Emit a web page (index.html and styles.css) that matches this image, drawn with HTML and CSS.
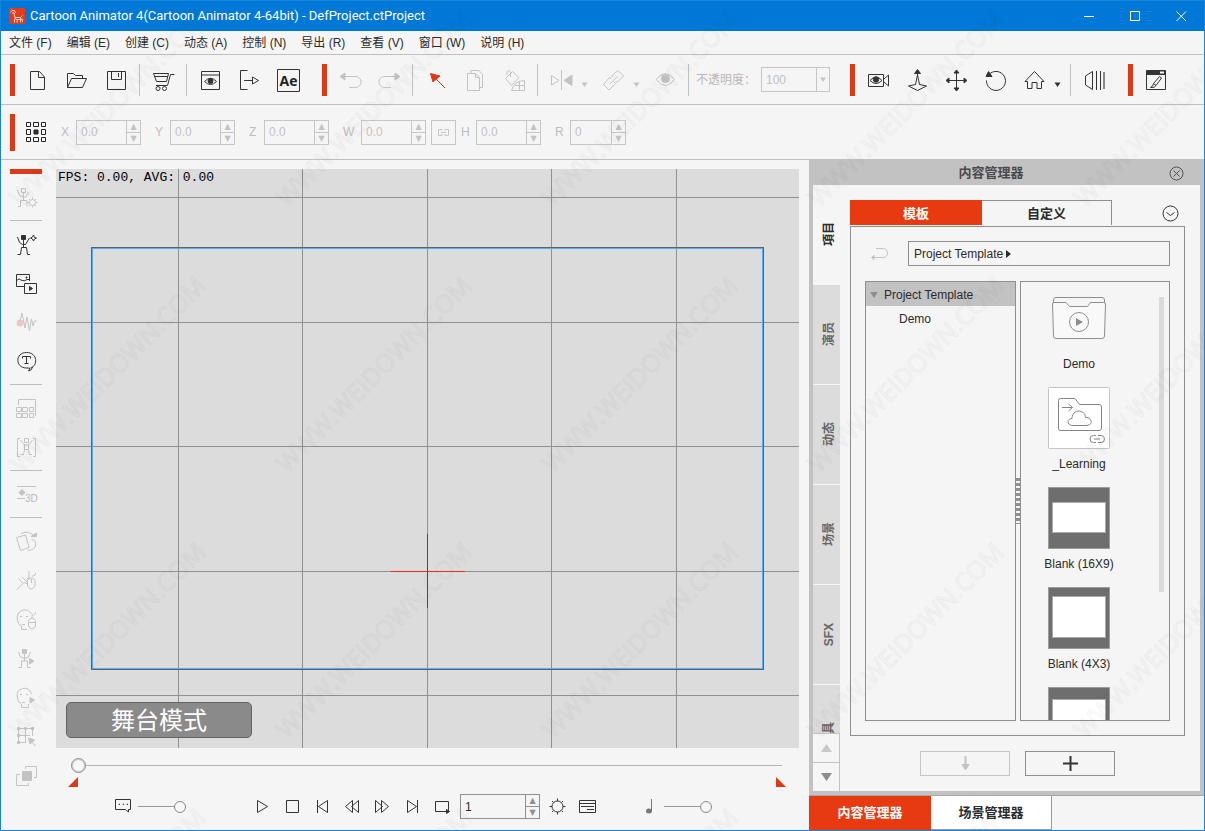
FILE: index.html
```html
<!DOCTYPE html>
<html lang="zh-CN">
<head>
<meta charset="utf-8">
<title>Cartoon Animator 4</title>
<link rel="stylesheet" href="styles.css">
</head>
<body>
<div class="app">
  <header class="titlebar">
    <svg class="logo" viewBox="0 0 16 16"><rect width="16" height="16" fill="#e8391a"/><path d="M1.500 4.500L3 2.500H5.500L6.500 4.500L5 6L6 9.500H11.500L13.500 7.500M2.500 1.500L3.500 2.500M6.500 9.500L5.500 12V14.500M8.500 11L8 14.500M11.500 10V14.500M13 10.500L13.500 14M3 5H5M6.500 11.500H12.500" stroke="#ffd9cf" fill="none"/></svg>
    <h1 class="title">Cartoon Animator 4(Cartoon Animator 4-64bit) - DefProject.ctProject</h1>
    <div class="win-buttons">
      <button class="win" aria-label="最小化"><svg viewBox="0 0 11 11"><path d="M0 5.500H10"/></svg></button>
      <button class="win" aria-label="最大化"><svg viewBox="0 0 11 11"><path d="M.5.5H9.500V9.500H.5Z"/></svg></button>
      <button class="win" aria-label="关闭"><svg viewBox="0 0 11 11"><path d="M.5.5L10 10M10 .5L.5 10"/></svg></button>
    </div>
  </header>

  <nav class="menubar">
    <button>文件 (F)</button><button>编辑 (E)</button><button>创建 (C)</button><button>动态 (A)</button><button>控制 (N)</button><button>导出 (R)</button><button>查看 (V)</button><button>窗口 (W)</button><button>说明 (H)</button>
  </nav>

  <div class="toolbar">
    <span class="grip"></span>
    <button class="tool" aria-label="新建"><svg viewBox="0 0 25 25"><path d="M4.500 4.500H13.500L18.500 10V22.500H4.500Z"/><path d="M12.500 4.500V10.500H18.500"/></svg></button>
    <button class="tool" aria-label="打开"><svg viewBox="0 0 25 25"><path d="M2.500 20.500V6.500H8.500L10.500 8.500H17.500V11.500M2.500 20.500L6.500 11.500H21.500L17.500 20.500Z"/></svg></button>
    <button class="tool" aria-label="保存"><svg viewBox="0 0 25 25"><path d="M3.500 4.500H21.500V22.500H3.500Z"/><path d="M7.500 4.500V12.500H17.500V4.500M14.500 6V10"/></svg></button>
    <span class="sep"></span>
    <button class="tool" aria-label="商店"><svg viewBox="0 0 25 25"><path d="M23.500 7.500H19.500L16.500 18.500H5M2.500 6.500H17.500L15.500 14.500H5.500ZM3.500 9.500H16.500"/><circle cx="7" cy="21.500" r="2"/><circle cx="13.500" cy="21.500" r="2"/></svg></button>
    <span class="sep"></span>
    <button class="tool" aria-label="预览"><svg viewBox="0 0 25 25"><path d="M3.500 4.500H21.500V22.500H3.500ZM3.500 8H21.500"/><path d="M6.500 14.500Q12.500 8 18.500 14.500Q12.500 20.500 6.500 14.500Z"/><circle cx="12.500" cy="14" r="2.500" class="solid"/></svg></button>
    <button class="tool" aria-label="导出"><svg viewBox="0 0 25 25"><path d="M10.500 3.500H3.500V22.500H10.500M7 13.500H15.500M15.500 10V17L21.500 13.500Z"/></svg></button>
    <button class="tool" aria-label="After Effects"><svg viewBox="0 0 25 25"><path d="M1.500 2.500H23.500V24.500H1.500Z"/><text class="ae" x="12.500" y="19" text-anchor="middle">Ae</text></svg></button>
    <span class="grip grip-next"></span>
    <button class="tool off" aria-label="撤销" disabled><svg viewBox="0 0 25 25"><path d="M5 9.500H17C25 9.500 25 20.500 17 20.500H11"/><path class="solid" d="M2 9.500L7 6V13Z"/></svg></button>
    <button class="tool off" aria-label="重做" disabled><svg viewBox="0 0 25 25"><path d="M20 9.500H8C0 9.500 0 20.500 8 20.500H14"/><path class="solid" d="M23 9.500L18 6V13Z"/></svg></button>
    <span class="sep"></span>
    <button class="tool pick" aria-label="选择"><svg viewBox="0 0 25 25"><path d="M10 10L21 21"/><path class="solid" d="M6.500 6.500L16 9L9 15Z"/></svg></button>
    <button class="tool off" aria-label="复制" disabled><svg viewBox="0 0 25 25"><path d="M4.500 6.500H12.500L16.500 10.500V23.500H4.500ZM8 6.500V3.500H16L19.500 7.500V20.500H17M12.500 7V10.500H16"/></svg></button>
    <button class="tool off" aria-label="填充" disabled><svg viewBox="0 0 25 25"><path d="M5 8V4.500Q7 2 8.500 5V10M3.500 11.500L10.500 4.500L17 10.500L9.500 18.500Z"/><path d="M22.500 13.500V23.500H9.500Q12 14 22.500 13.500ZM17.500 14.500V23M13 18.500H22"/></svg></button>
    <span class="sep"></span>
    <button class="tool off" aria-label="翻转" disabled><svg viewBox="0 0 25 25"><path d="M2.500 8.500V18L10 13.500ZM12.500 3V23"/><path class="solid" d="M23 8V18.500L15 13.500Z"/></svg></button>
    <button class="more off" aria-label="翻转选项" disabled><svg viewBox="0 0 7 25"><path class="solid" d="M.5 15.500H6.500L3.500 20Z"/></svg></button>
    <button class="tool off" aria-label="链接" disabled><svg viewBox="0 0 25 25"><path d="M10.500 12L8.500 10.500L2.500 17.500L8 23L14.500 16.500L12.500 14.500M12 10.500L10.500 9L17 3.500L22.500 9L16 15.500L14.500 14M8.500 17L16.500 9.500"/></svg></button>
    <button class="more off" aria-label="链接选项" disabled><svg viewBox="0 0 7 25"><path class="solid" d="M.5 15.500H6.500L3.500 20Z"/></svg></button>
    <button class="tool off" aria-label="可见" disabled><svg viewBox="0 0 25 25"><path d="M3 12.500Q12.500 .5 21.500 12.500Q12.500 24.500 3 12.500Z"/><circle class="solid" cx="12.500" cy="11.500" r="4"/></svg></button>
    <span class="sep"></span>
    <label class="opacity-label" for="opacity">不透明度：</label>
    <span class="combo"><select id="opacity" disabled><option>100</option></select><svg viewBox="0 0 13 23"><path d="M.5 0V23"/><path class="solid" d="M4 9.500H10L7 14Z"/></svg></span>
    <span class="grip grip-far"></span>
    <button class="tool" aria-label="摄像机"><svg viewBox="0 0 25 25"><path d="M2.500 7.500H17.500V19.500H2.500ZM18 12L22.500 8V19L18 15"/><path d="M4 13.500Q10 6.500 16 13.500Q10 19.500 4 13.500Z"/><circle class="solid" cx="10" cy="12.500" r="2.700"/></svg></button>
    <button class="tool" aria-label="升降"><svg viewBox="0 0 25 25"><path d="M12.500 3V8L14.500 17.500L21.500 19L12.500 23.500L3.500 19L10.500 17.500L12.500 8"/><path class="solid" d="M12.500 2.500L15.500 6.500H9.500Z"/></svg></button>
    <button class="tool" aria-label="移动"><svg viewBox="0 0 25 25"><path d="M12.500 4V23M3 13.500H22"/><path class="solid" d="M12.500 3L15 6H10ZM12.500 24L15 21H10ZM2 13.500L5 11V16ZM23 13.500L20 11V16Z"/></svg></button>
    <button class="tool" aria-label="旋转"><svg viewBox="0 0 25 25"><path d="M6 7.500A9.500 9.500 0 1 1 3.500 13.500"/><path class="solid" d="M5.500 4.500L9 9.500H3Z"/></svg></button>
    <button class="tool" aria-label="主页"><svg viewBox="0 0 25 25"><path d="M12.500 4.500L22 14.500H19.500V21.500H15V15.500H10V21.500H5.500V14.500H3Z"/></svg></button>
    <button class="more" aria-label="主页选项"><svg viewBox="0 0 7 25"><path class="solid" d="M.5 15.500H6.500L3.500 20Z"/></svg></button>
    <span class="sep"></span>
    <button class="tool" aria-label="景深"><svg viewBox="0 0 25 25"><path d="M10.500 4.500L3.500 9V18L10.500 22.500ZM14.500 4V23M18.500 4V23"/><path d="M22 5V22" stroke="#888" stroke-width="2"/></svg></button>
    <span class="grip grip-next"></span>
    <button class="tool" aria-label="合成器"><svg viewBox="0 0 25 25"><path d="M2.500 4.500H21.500V22.500H2.500Z"/><path class="solid" d="M2.500 3.500H21.500V7.500H2.500Z"/><path d="M16 4.500H20V6.500H16Z" fill="#fff" stroke="none"/><path d="M15.500 9.500L17.500 11L12 18.500L9.500 16.500ZM9.500 16.500Q9.500 19 6.500 20.500Q11 21 12 18.500"/></svg></button>
  </div>

  <div class="toolbar transform">
    <span class="grip"></span>
    <button class="anchor" aria-label="锚点"><svg viewBox="0 0 25 25"><path d="M2.500 2.500H6.500V6.500H2.500ZM9.500 2.500H14.500V6.500H9.500ZM17.500 2.500H21.500V6.500H17.500ZM2.500 9.500H6.500V14.500H2.500ZM17.500 9.500H21.500V14.500H17.500ZM2.500 17.500H6.500V21.500H2.500ZM9.500 17.500H14.500V21.500H9.500ZM17.500 17.500H21.500V21.500H17.500Z"/><path class="solid" d="M10 10H14V14H10Z"/></svg></button>
    <div class="field first"><label for="fx">X</label><span class="spin"><input id="fx" value="0.0" disabled><span class="steps"><button disabled aria-label="增加">▲</button><button disabled aria-label="减少">▼</button></span></span></div>
    <div class="field"><label for="fy">Y</label><span class="spin"><input id="fy" value="0.0" disabled><span class="steps"><button disabled aria-label="增加">▲</button><button disabled aria-label="减少">▼</button></span></span></div>
    <div class="field"><label for="fz">Z</label><span class="spin"><input id="fz" value="0.0" disabled><span class="steps"><button disabled aria-label="增加">▲</button><button disabled aria-label="减少">▼</button></span></span></div>
    <div class="field wide"><label for="fw">W</label><span class="spin"><input id="fw" value="0.0" disabled><span class="steps"><button disabled aria-label="增加">▲</button><button disabled aria-label="减少">▼</button></span></span></div>
    <button class="lock" aria-label="锁定比例" disabled><svg viewBox="0 0 13 9"><path d="M5 2.500V1.500H1.500V7.500H5V6M8 2.500V1.500H11.500V7.500H8V6M4 4.500H9"/></svg></button>
    <div class="field near"><label for="fh">H</label><span class="spin"><input id="fh" value="0.0" disabled><span class="steps"><button disabled aria-label="增加">▲</button><button disabled aria-label="减少">▼</button></span></span></div>
    <div class="field"><label for="fr">R</label><span class="spin short"><input id="fr" value="0" disabled><span class="steps"><button disabled aria-label="增加">▲</button><button disabled aria-label="减少">▼</button></span></span></div>
  </div>

  <main class="work">
    <aside class="side">
      <span class="side-grip"></span>
      <button class="off" disabled aria-label="角色设定"><svg viewBox="0 0 25 25"><path d="M7.500 3.500H11.500V7.500H7.500ZM3.500 5L5.500 10.500L9.500 12H12L14.500 7M9.500 8V15M4 21.500H6.500V15.500H13V21.500"/><circle cx="18.500" cy="17.500" r="3"/><path d="M18.500 12.500V14M18.500 21V22.500M13.500 17.500H15M22 17.500H23.500M15 14L16 15M21 20L22 21M22 14L21 15M15 21L16 20"/></svg></button>
      <hr>
      <button aria-label="新建角色"><svg viewBox="0 0 25 25"><path class="solid" d="M7.500 3.500H11.500V7.500H7.500Z"/><path d="M3.500 5L5.500 10.500L8.500 12.500H11.500L15.500 6M9.500 8V15M3.500 22.500H6.500L7.500 15.500H12.500L13.500 22.500H16M19.500 3L20.500 5.500L22.500 6L20.500 7L19.500 9L18.500 7L16.500 6L18.500 5Z"/></svg></button>
      <button aria-label="新建场景"><svg viewBox="0 0 25 25"><path d="M10 15.500H2.500V3.500H15.500V10M2.500 9.500Q5 6.500 8 9.500Q11 10.500 13 8.500H15.500M10.500 12.500H22.500V22.500H10.500Z"/><path class="solid" d="M15.500 15.500V19.500L18.500 17.500ZM12 6H13V7H12Z"/></svg></button>
      <button class="off" disabled aria-label="录音"><svg viewBox="0 0 25 25"><circle cx="6" cy="13" r="3.500" fill="#ecc8c8" stroke="none"/><path d="M6 11L8 3L11 18L13 7L15.500 21L17.500 9L19 16L20.500 11H22.500"/></svg></button>
      <button aria-label="文字"><svg viewBox="0 0 25 25"><path d="M16.500 19C24 17 24 3.500 12.500 3.500C1 3.500 1 19 12.500 19L15.500 19Q16 20 14.500 22Q18 21.500 18.500 18"/><path d="M8.500 9.500V7.500H16.500V9.500M12.500 7.500V14.500M10.500 14.500H14.500"/></svg></button>
      <hr>
      <button class="off" disabled aria-label="精灵编辑"><svg viewBox="0 0 25 25"><path d="M4.500 9V3.500H21.500V20M2.500 11.500H7.500V15.500H2.500ZM8.500 11.500H13.500V15.500H8.500ZM15.500 11.500H19.500V15.500H15.500ZM2.500 17.500H7.500V21.500H2.500ZM8.500 17.500H13.500V21.500H8.500ZM15.500 17.500H19.500V21.500H15.500Z"/></svg></button>
      <button class="off" disabled aria-label="骨骼编辑"><svg viewBox="0 0 25 25"><path d="M6 3.500H3.500V21.500H6M19 3.500H21.500V21.500H19M10.500 3.500H14.500V7.500H10.500ZM6.500 5L10.500 10H14.500L18.500 5M10.500 10V14.500L9.500 19.500H7M14.500 10V14.500L15.500 19.500H18M10.500 14.500H14.500"/></svg></button>
      <hr>
      <button class="off" disabled aria-label="3D"><svg viewBox="0 0 25 25"><path d="M3 4.500H22M3 16.500H11"/><path class="solid" d="M8 7.500L11 10.500L8 13.500L5 10.500Z"/><text class="three" x="11" y="20">3D</text></svg></button>
      <hr>
      <button class="off" disabled aria-label="旋转角色"><svg viewBox="0 0 25 25"><path d="M2.500 8.500L11.500 6L15 18.500L6.500 21.500ZM7 4.500Q15 1 20 7M17.500 10.500Q23 11.500 21.500 17Q18.500 22.500 13.500 21"/><path class="solid" d="M17 7.500H22.500V4Z"/></svg></button>
      <button class="off" disabled aria-label="动作控制"><svg viewBox="0 0 25 25"><path d="M2.500 22L10 14.500L14 16M5 11L8.500 15M8 9L13 14"/><path d="M12.500 11L15 10M13.500 12V18Q17 24 21 18V12Q17 8 13.500 12ZM17.500 11V15M18 8Q22 8 21.500 5M15 3V12"/></svg></button>
      <button class="off" disabled aria-label="面部控制"><svg viewBox="0 0 25 25"><path d="M17.500 7Q14 1 8 3.500Q2 6 3.500 13Q4 18 7.500 19V22.500H13M6 9.500H8M12 9.500H14M8 17.500H11"/><path d="M14.500 13.500Q18 9 21.500 13.500V19Q18 25 14.500 19ZM14.500 15.500H21.500M18 11V8Q22 8 21.500 5"/></svg></button>
      <button class="off" disabled aria-label="动作剪辑"><svg viewBox="0 0 25 25"><path class="solid" d="M8.500 3.500H12.500V7.500H8.500Z"/><path d="M4.500 6L6.500 11L10.500 12.500L14.500 11L16.500 6M10.500 8V15M4.500 21.500H7.500V15H13.500V21.500H17"/><path class="solid" d="M15.500 12.500V18L20 15Z"/></svg></button>
      <button class="off" disabled aria-label="面部剪辑"><svg viewBox="0 0 25 25"><path d="M17.500 9Q15 2 8.500 3.500Q1.500 6 3.500 13Q4 18 7.500 19V22.500H14.500V19M6 9.500H8M12 9.500H14M8 17.500H11"/><path class="solid" d="M16 12.500V18L20.500 15Z"/></svg></button>
      <button class="off" disabled aria-label="网格变形"><svg viewBox="0 0 25 25"><path d="M4.500 4.500H18.500V12M4.500 4.500V18.500H12M11.500 4.500V18.500M4.500 11.500H16M16 16L21.500 22"/><path class="solid" d="M3.500 3.500H5.500V5.500H3.500ZM10.500 3.500H12.500V5.500H10.500ZM17.500 3.500H19.500V5.500H17.500ZM3.500 10.500H5.500V12.500H3.500ZM3.500 17.500H5.500V19.500H3.500ZM14.500 14L20.500 16L16 20Z"/></svg></button>
      <button class="off" disabled aria-label="图层顺序"><svg viewBox="0 0 25 25"><path class="solid" d="M8.500 8.500H17.500V17.500H8.500Z"/><path d="M11.500 6V3.500H22.500V14.500H20M6 11.500H2.500V22.500H14.500V20"/></svg></button>
    </aside>

    <section class="center">
      <div class="stage">
        <svg class="grid" viewBox="0 0 743 579" preserveAspectRatio="xMidYMid slice">
          <path class="rule" d="M0 28.500H743M0 153.500H743M0 277.500H743M0 402.500H743M0 526.500H743M122.500 0V579M246.500 0V579M371.500 0V579M495.500 0V579M620.500 0V579"/>
          <rect class="edge" x="35.500" y="78.500" width="672" height="422"/>
          <rect class="edge-in" x="36.500" y="79.500" width="670" height="420"/>
          <path class="axis-x" d="M334 402.500H409"/>
          <path class="axis-y" d="M371.500 365V439"/>
        </svg>
        <p class="fps">FPS: 0.00, AVG: 0.00</p>
        <p class="mode">舞台模式</p>
      </div>
      <div class="timeline">
        <input class="scrub" type="range" min="1" max="900" value="1" aria-label="时间轴">
        <div class="marks"><svg viewBox="0 0 10 10"><path d="M10 0V10H0Z"/></svg><svg viewBox="0 0 10 10"><path d="M0 0V10H10Z"/></svg></div>
      </div>
      <div class="player">
        <div class="group left">
          <button aria-label="注释"><svg viewBox="0 0 25 25"><path d="M4.500 5.500H19.500V15.500H17.500V18L14.500 15.500H4.500Z"/><path class="solid" d="M8 10H8.500V10.500H8ZM12 10H12.500V10.500H12ZM16 10H16.500V10.500H16Z"/></svg></button>
          <input class="mini" type="range" value="100" aria-label="缩放">
        </div>
        <div class="group">
          <button aria-label="播放"><svg viewBox="0 0 25 25"><path d="M7.500 6.500L17.500 12.500L7.500 18.500Z"/></svg></button>
          <button aria-label="停止"><svg viewBox="0 0 25 25"><path d="M6.500 6.500H18.500V18.500H6.500Z"/></svg></button>
          <button aria-label="起始"><svg viewBox="0 0 25 25"><path d="M7.500 6V19M17.500 6.500V18.500L8.500 12.500Z"/></svg></button>
          <button aria-label="后退"><svg viewBox="0 0 25 25"><path d="M12.500 6.500V18.500L5.500 12.500ZM18.500 6.500V18.500L11.500 12.500Z"/></svg></button>
          <button aria-label="前进"><svg viewBox="0 0 25 25"><path d="M11.500 6.500V18.500L18.500 12.500ZM5.500 6.500V18.500L12.500 12.500Z"/></svg></button>
          <button aria-label="末尾"><svg viewBox="0 0 25 25"><path d="M17.500 6V19M7.500 6.500V18.500L16.500 12.500Z"/></svg></button>
          <button aria-label="循环"><svg viewBox="0 0 25 25"><path d="M16 17.500H5.500V7.500H18.500V17.500H16"/><path class="solid" d="M16.500 15.500V19.500L19.500 17.500Z"/></svg></button>
          <span class="spin frame"><input value="1" aria-label="当前帧"><span class="steps"><button aria-label="增加">▲</button><button aria-label="减少">▼</button></span></span>
          <button aria-label="设置"><svg viewBox="0 0 25 25"><circle cx="11.500" cy="12.500" r="5.500"/><path d="M11.500 4.500V7M11.500 18V20.500M3.500 12.500H6M17 12.500H19.500M6 7L7.500 8.500M15.500 16.500L17 18M17 7L15.500 8.500M6 18L7.500 16.500"/></svg></button>
          <button aria-label="时间轴面板"><svg viewBox="0 0 25 25"><path d="M3.500 6.500H19.500V18.500H3.500ZM3.500 9.500H19.500M5 12.500H18M11 15.500H18"/></svg></button>
        </div>
        <div class="group right">
          <button aria-label="音量"><svg viewBox="0 0 25 25"><path d="M14.500 5V17" stroke="#777"/><ellipse cx="12" cy="17" rx="3" ry="2.500" fill="#777" stroke="none"/></svg></button>
          <input class="mini" type="range" value="100" aria-label="音量">
        </div>
      </div>
    </section>

    <section class="dock">
      <div class="panel">
        <header class="panel-head"><h2>内容管理器</h2><button aria-label="关闭面板"><svg viewBox="0 0 15 15"><circle cx="7.500" cy="7.500" r="6.500"/><path d="M4.500 4.500L10.500 10.500M10.500 4.500L4.500 10.500"/></svg></button></header>
        <div class="panel-body">
          <div class="cats">
            <div class="cat-list">
              <button class="cat on"><span>項目</span></button>
              <button class="cat"><span>演员</span></button>
              <button class="cat"><span>动态</span></button>
              <button class="cat"><span>场景</span></button>
              <button class="cat"><span>SFX</span></button>
              <button class="cat"><span>道具</span></button>
            </div>
            <button class="cat-scroll" aria-label="上移"><svg viewBox="0 0 11 8"><path fill="#c8c8c8" d="M5.500 0L11 8H0Z"/></svg></button>
            <button class="cat-scroll" aria-label="下移"><svg viewBox="0 0 11 8"><path fill="#8c8c8c" d="M5.500 8L11 0H0Z"/></svg></button>
          </div>
          <div class="content">
            <div class="tabs">
              <button class="tab on">模板</button><button class="tab">自定义</button>
              <button class="fold" aria-label="展开"><svg viewBox="0 0 17 17"><circle cx="8.500" cy="8.500" r="7.500"/><path d="M4.500 7.500L8.500 10.500L12.500 7.500"/></svg></button>
            </div>
            <div class="browser">
              <div class="path">
                <button class="back off" disabled aria-label="返回"><svg viewBox="0 0 19 13"><path d="M6 1.500H13C19 1.500 19 10.500 13 10.500H4"/><path class="solid" d="M1.500 10.500L4 8.500V12.500Z"/></svg></button>
                <button class="crumb">Project Template<svg viewBox="0 0 5 8"><path d="M0 0L5 4L0 8Z"/></svg></button>
              </div>
              <div class="panes">
                <ul class="tree">
                  <li><a class="on" href="#root"><svg viewBox="0 0 8 6"><path d="M0 0H8L4 6Z"/></svg>Project Template</a></li>
                  <li><a class="child" href="#demo">Demo</a></li>
                </ul>
                <span class="split"></span>
                <div class="thumbs">
                  <div class="items">
                    <a class="item" href="#demo"><svg class="thumb" viewBox="0 0 62 62"><path d="M5.500 17V13Q5.500 10.500 8 10.500H54Q56.500 10.500 56.500 13V16" fill="none" stroke="#8e8e8e"/><path d="M4.500 17Q4.500 15.500 6 15.500H18L21.500 19.500H39.500L42.500 15.500H55.500Q57.500 15.500 57.500 17L56.500 49Q56.500 51.500 54 51.500H8Q5.500 51.500 5.500 49Z" fill="#f9f9f9" stroke="#8e8e8e"/><circle cx="31" cy="35" r="9.500" fill="none" stroke="#8e8e8e"/><path d="M28 31V39L35 35Z" fill="#8e8e8e" stroke="none"/></svg><span>Demo</span></a>
                    <a class="item" href="#learning"><svg class="thumb" viewBox="0 0 62 62"><rect x=".5" y=".5" width="61" height="61" rx="1" fill="#fff" stroke="#c4c4c4"/><path d="M10.500 14V13.500Q10.500 11.500 12 11.500H27L31.500 17.500H51Q53.500 17.500 53.500 20V41Q53.500 43.500 51 43.500H12Q10.500 43.500 10.500 41ZM14 20.500H24.500M20.500 17L24.500 20.500L20.500 24M25 38.500C19 38.500 18 32 24 31.500C24 26 29 22 34 25C38 27 37 29 37.500 30.500C44 30 46 38.500 38 38.500ZM48 48.500H45.500Q42 48.500 42 52Q42 55.500 45.500 55.500H48M46 52H52M50 48.500H53Q56.500 48.500 56.500 52Q56.500 55.500 53 55.500H50" fill="none" stroke="#858585"/></svg><span>_Learning</span></a>
                    <a class="item" href="#b169"><svg class="thumb" viewBox="0 0 62 62"><rect x=".5" y=".5" width="61" height="61" fill="#6e6e6e" stroke="#9c9c9c"/><rect x="4.500" y="15.500" width="53" height="30" fill="#fff" stroke="#ababab"/></svg><span>Blank (16X9)</span></a>
                    <a class="item" href="#b43"><svg class="thumb" viewBox="0 0 62 62"><rect x=".5" y=".5" width="61" height="61" fill="#6e6e6e" stroke="#9c9c9c"/><rect x="4.500" y="9.500" width="53" height="41" fill="#fff" stroke="#ababab"/></svg><span>Blank (4X3)</span></a>
                    <a class="item" href="#b32"><svg class="thumb" viewBox="0 0 62 62"><rect x=".5" y=".5" width="61" height="61" fill="#6e6e6e" stroke="#9c9c9c"/><rect x="4.500" y="12.500" width="53" height="36" fill="#fff" stroke="#ababab"/></svg></a>
                  </div>
                  <div class="bar"><span></span></div>
                </div>
              </div>
            </div>
            <div class="actions">
              <button class="off" disabled aria-label="应用"><svg viewBox="0 0 15 15"><path d="M7.500 0V10" stroke-width="2"/><path class="solid" d="M4 8.500H11L7.500 14Z"/></svg></button>
              <button aria-label="添加"><svg viewBox="0 0 15 15"><path d="M7.500 0V15M0 7.500H15" stroke-width="2"/></svg></button>
            </div>
          </div>
        </div>
      </div>
      <div class="dock-tabs"><button class="on">内容管理器</button><button>场景管理器</button></div>
    </section>
  </main>

  <svg class="mark" aria-hidden="true">
    <defs><pattern id="mark" x="-24" y="-26" width="266" height="266" patternUnits="userSpaceOnUse"><text transform="translate(44 233) rotate(-45)">WWW.WEIDOWN.COM</text></pattern></defs>
    <rect width="100%" height="100%" fill="url(#mark)"/>
  </svg>
</div>
</body>
</html>
```
FILE: styles.css
```css
* { box-sizing: border-box; }
body { margin: 0; font: 12px/18px "Liberation Sans", "Noto Sans CJK SC", sans-serif; color: #2b2b2b; }
button, input, select { margin: 0; padding: 0; border: 0; background: none; font: inherit; color: inherit; }
h1, h2, p, ul { margin: 0; padding: 0; }
a { color: inherit; text-decoration: none; }
svg { display: block; flex: none; fill: none; stroke: #333; }
svg .solid { fill: #333; }
.off svg { stroke: #c3c3c3; }
.off svg .solid { fill: #c3c3c3; }

.app { position: relative; display: flex; flex-direction: column; height: 100vh; border: 1px solid #1883d7; background: #f5f5f5; overflow: hidden; }

.titlebar { display: flex; align-items: center; height: 30px; flex: none; padding-left: 8px; background: #0078d7; color: #fff; }
.logo { width: 16px; height: 16px; stroke: none; }
.title { margin-left: 5px; font: 13px/18px Roboto, "Open Sans", sans-serif; }
.win-buttons { display: flex; margin-left: auto; }
.win { display: grid; place-items: center; width: 46px; height: 30px; }
.win svg { width: 11px; height: 11px; stroke: #fff; }

.menubar { display: flex; gap: 15px; height: 24px; flex: none; padding: 1px 0 0 8px; border-bottom: 1px solid #c0c0c0; }
.menubar button { white-space: nowrap; }

.toolbar { display: flex; align-items: center; height: 50px; flex: none; padding-left: 9px; border-bottom: 1px solid #c0c0c0; }
.grip { width: 5px; height: 32px; margin-right: 4px; background: #dc3a17; }
.grip-next { margin-left: 14px; }
.grip-far { margin-left: 20px; }
.sep { width: 1px; height: 32px; margin: 0 4px 0 3px; background: #c0c0c0; }
.tool { display: grid; place-items: center; width: 39px; height: 39px; }
.tool svg, .anchor svg { width: 25px; height: 25px; }
.ae { font: bold 14px "Open Sans", sans-serif; fill: #222; stroke: none; }
.pick svg { stroke: #dc3a17; }
.pick svg .solid { fill: #dc3a17; }
.more { width: 13px; }
.more svg { width: 7px; height: 25px; stroke: none; }
.opacity-label { width: 68px; padding-left: 3px; color: #b8b8b8; white-space: nowrap; }
.combo { display: flex; width: 69px; height: 25px; border: 1px solid #c6c6c6; }
.combo select { flex: 1; min-width: 0; padding-left: 4px; appearance: none; color: #c0c0c0; opacity: 1; }
.combo svg { width: 13px; stroke: #c6c6c6; }
.combo svg .solid { fill: #c6c6c6; stroke: none; }

.transform { height: 55px; }
.transform .grip { height: 37px; }
.anchor { display: grid; place-items: center; width: 35px; height: 35px; }
.anchor svg { stroke: #222; }
.field { display: flex; align-items: center; margin-left: 14px; color: #bcbcbc; }
.field.first { margin-left: 7px; }
.field.near { margin-left: 5px; }
.field label { width: 15px; }
.field.wide label { width: 18px; }
.spin { display: flex; width: 65px; height: 25px; border: 1px solid #c6c6c6; }
.spin.short { width: 56px; }
.spin input { flex: 1; min-width: 0; padding-left: 4px; }
.spin input:disabled { color: #c3c3c3; }
.steps { display: flex; flex-direction: column; width: 14px; border-left: 1px solid #c6c6c6; }
.steps button { flex: 1; min-height: 0; font: 8px/11px "DejaVu Sans", sans-serif; text-align: center; color: #c3c3c3; overflow: hidden; }
.steps button + button { border-top: 1px solid #c6c6c6; }
.lock { display: grid; place-items: center; width: 25px; height: 25px; margin-left: 5px; border: 1px solid #c6c6c6; }
.lock svg { width: 13px; height: 9px; stroke: #c6c6c6; }

.work { display: flex; flex: 1; min-height: 0; }
.side { width: 55px; flex: none; padding: 9px 0 0 9px; }
.side-grip { display: block; width: 32px; height: 5px; margin-bottom: 4px; background: #dc3a17; }
.side button { display: grid; place-items: center; width: 33px; height: 39px; }
.side svg { width: 25px; height: 25px; }
.side hr { width: 32px; height: 1px; margin: 3px 0 4px; border: 0; background: #bdbdbd; }
.three { font: 10px "Liberation Sans", sans-serif; fill: #b8b8b8; stroke: none; }

.center { display: flex; flex: 1; flex-direction: column; min-width: 0; padding-top: 9px; }
.stage { position: relative; flex: 1; min-height: 0; background: #dcdcdc; }
.grid { width: 100%; height: 100%; }
.grid .rule { stroke: #919191; }
.grid .edge { stroke: #5d6266; }
.grid .edge-in { stroke: #54aef5; }
.grid .axis-x { stroke: #ff2828; stroke-width: 1; }
.grid .axis-y { stroke: #3a35e8; stroke-width: 1; }
.fps { position: absolute; left: 2px; top: 1px; font: 13px/16px "Liberation Mono", monospace; color: #000; }
.mode { position: absolute; left: 10px; bottom: 10px; width: 186px; height: 36px; border: 1px solid #626262; border-radius: 5px; background: #8a8a8a; color: #fff; font-size: 24px; line-height: 36px; text-align: center; }

.timeline { padding: 9px 13px 0 12px; }
input[type="range"] { display: block; appearance: none; height: 16px; }
input[type="range"]::-webkit-slider-thumb { appearance: none; border: 1px solid #8a8a8a; border-radius: 50%; background: #f7f7f7; }
input[type="range"]::-webkit-slider-runnable-track { display: flex; align-items: center; }
.scrub { width: calc(100% - 7px); margin-left: 3px; background: linear-gradient(#b4b4b4, #b4b4b4) center / 100% 1px no-repeat; }
.scrub::-webkit-slider-thumb { width: 15px; height: 15px; box-shadow: inset 0 0 0 1px #c8c8c8; }
.marks { display: flex; justify-content: space-between; padding-top: 4px; }
.marks svg { width: 10px; height: 10px; fill: #dc3a17; stroke: none; }

.player { display: grid; grid-template-columns: 1fr auto 1fr; align-items: center; height: 43px; padding-right: 5px; }
.group { display: flex; align-items: center; padding-bottom: 4px; }
.group > button { display: grid; place-items: center; width: 30px; height: 25px; }
.group svg { width: 25px; height: 25px; }
.group.left { justify-content: flex-end; padding-right: 61px; }
.group.right { padding-left: 31px; }
.mini { width: 48px; background: linear-gradient(#9a9a9a, #9a9a9a) center / 100% 1px no-repeat; }
.mini::-webkit-slider-thumb { width: 12px; height: 12px; }
.frame { width: 80px; margin: 0 3px; border-color: #8f8f8f; }
.frame .steps, .frame .steps button + button { border-color: #8f8f8f; }
.frame .steps button { color: #8f8f8f; }

.dock { display: flex; flex-direction: column; width: 395px; flex: none; margin-left: 10px; }
.panel { display: flex; flex: 1; flex-direction: column; min-height: 0; padding: 0 4px 4px; background: #c2c2c2; }
.panel-head { display: grid; grid-template-columns: 40px 1fr 47px; align-items: center; height: 25px; flex: none; }
.panel-head h2 { grid-column: 2; margin-right: 24px; font-size: 13px; line-height: 26px; text-align: center; color: #4a4a4a; }
.panel-head button { display: grid; place-items: center; }
.panel-head svg { width: 15px; height: 15px; stroke: #555; }
.panel-body { display: flex; flex: 1; min-height: 0; background: #f5f5f5; }
.cats { display: flex; flex-direction: column; width: 27px; flex: none; }
.cat-list { flex: 1; min-height: 0; overflow: hidden; }
.cat { display: grid; place-items: center; width: 27px; height: 100px; border-bottom: 1px solid #f5f5f5; background: #dcdcdc; color: #666; font-weight: bold; padding-left: 5px; }
.cat.on { background: none; color: #2b2b2b; }
.cat span { writing-mode: vertical-rl; text-orientation: sideways; transform: rotate(180deg); }
.cat-scroll { display: grid; place-items: center; height: 29px; flex: none; border: 1px solid #c2c2c2; border-width: 1px 1px 0 0; }
.cat-scroll svg { width: 11px; height: 8px; stroke: none; }

.content { display: flex; flex: 1; flex-direction: column; min-width: 0; padding: 15px 15px 15px 10px; }
.tabs { display: flex; height: 26px; flex: none; }
.tab { width: 130px; height: 25px; padding-top: 2px; border: 1px solid #8f8f8f; border-bottom: 0; border-left: 0; font-size: 13px; font-weight: bold; }
.tab.on { width: 132px; padding-top: 3px; border: 0; background: #e83a10; color: #fff; }
.fold { margin: 0 6px 0 auto; }
.fold svg { width: 17px; height: 17px; }
.browser { display: flex; flex: 1; flex-direction: column; min-height: 0; padding: 14px; border: 1px solid #8f8f8f; }
.path { display: flex; align-items: center; justify-content: space-between; padding-left: 5px; margin-bottom: 15px; }
.back svg { width: 19px; height: 13px; }
.crumb { display: flex; align-items: center; gap: 3px; width: 262px; height: 25px; padding-left: 5px; border: 1px solid #8f8f8f; }
.crumb svg { width: 5px; height: 8px; fill: #2b2b2b; stroke: none; }
.panes { display: flex; flex: 1; min-height: 0; }
.tree { flex: 1; border: 1px solid #8f8f8f; list-style: none; }
.tree a { display: flex; align-items: center; height: 24px; padding: 2px 0 0 4px; gap: 6px; }
.tree a.on { background: #c2c2c2; }
.tree a.child { padding-left: 33px; }
.tree svg { width: 8px; height: 6px; fill: #8f8f8f; stroke: none; }
.split { align-self: center; width: 4px; height: 46px; background: repeating-linear-gradient(#8f8f8f 0 3px, #f5f5f5 3px 5px); }
.thumbs { display: flex; width: 150px; border: 1px solid #8f8f8f; overflow: hidden; }
.items { flex: 1; padding-top: 5px; }
.item { display: flex; flex-direction: column; align-items: center; gap: 6px; padding-bottom: 14px; }
.thumb { width: 62px; height: 62px; }
.bar { width: 32px; padding: 15px 0 0 22px; }
.bar span { display: block; width: 5px; height: 295px; background: #dadada; }
.actions { display: flex; justify-content: center; gap: 15px; padding-top: 15px; flex: none; }
.actions button { display: grid; place-items: center; width: 90px; height: 25px; border: 1px solid #8f8f8f; }
.actions .off { border-color: #c6c6c6; }
.actions svg { width: 15px; height: 15px; }

.dock-tabs { display: flex; height: 35px; flex: none; border-top: 1px solid #a8a8a8; }
.dock-tabs button { width: 121px; border: 1px solid #9a9a9a; border-width: 0 1px 1px 0; background: #fff; font-size: 13px; font-weight: bold; }
.dock-tabs .on { width: 122px; border: 0; background: #e83a10; color: #fff; }

.mark { position: absolute; inset: 0; width: 100%; height: 100%; pointer-events: none; stroke: none; }
.mark text { font: 25px "Open Sans", sans-serif; fill: none; stroke: #000; stroke-opacity: 0.04; stroke-width: 1; }
```
